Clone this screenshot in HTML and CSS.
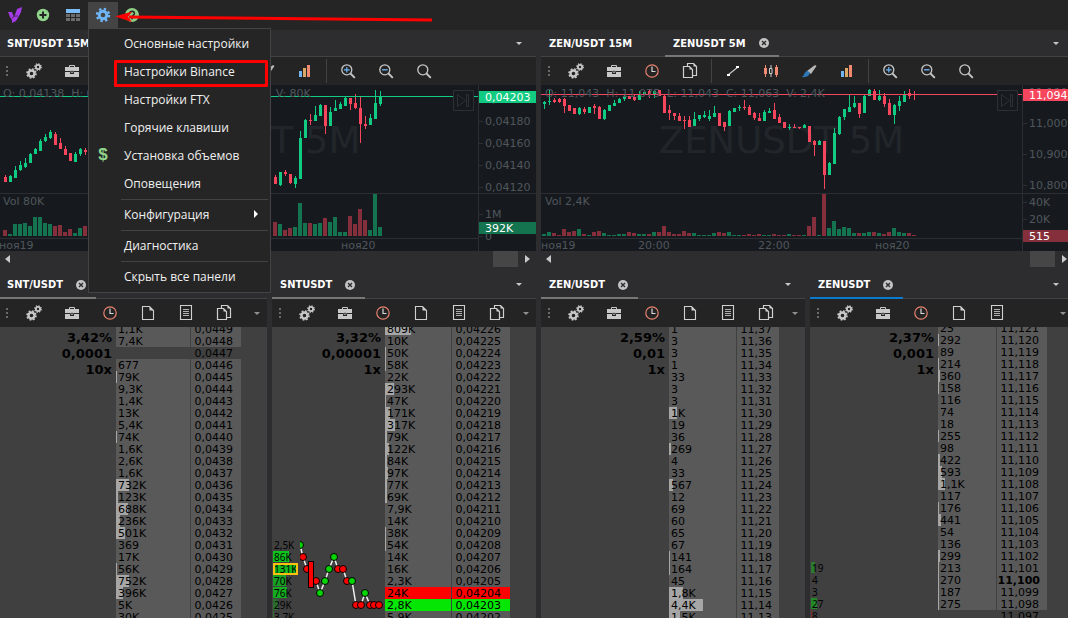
FILE: index.html
```html
<!DOCTYPE html>
<html lang="ru">
<head>
<meta charset="utf-8">
<title>Торговый терминал</title>
<link rel="stylesheet" href="styles.css">
</head>
<body>
<svg class="sprite" aria-hidden="true">
  <symbol id="i-gears" viewBox="0 0 16 16">
    <g fill="none" stroke="#c8c8c8">
      <circle cx="5.5" cy="10.5" r="3" stroke-width="2.4"/>
      <circle cx="5.5" cy="10.5" r="4.5" stroke-width="1.6" stroke-dasharray="1.77 1.77"/>
      <circle cx="12" cy="4" r="2.1" stroke-width="1.8"/>
      <circle cx="12" cy="4" r="3.3" stroke-width="1.2" stroke-dasharray="1.3 1.3"/>
    </g>
  </symbol>
  <symbol id="i-case" viewBox="0 0 16 16">
    <path d="M5.5 4.5v-2h5v2" fill="none" stroke="#c8c8c8"/>
    <path d="M1 4h14v4H1zM1 9h5v2h4V9h5v5H1z" fill="#c8c8c8"/>
    <path d="M7 7.5h2v2H7z" fill="#242424" stroke="#c8c8c8" stroke-width=".6"/>
  </symbol>
  <symbol id="i-clock" viewBox="0 0 16 16">
    <circle cx="8" cy="8" r="6.2" fill="none" stroke="#e8826e" stroke-width="1.2"/>
    <path d="M8 3.5V8.5H11.5" fill="none" stroke="#d8d8d8" stroke-width="1.2"/>
  </symbol>
  <symbol id="i-file" viewBox="0 0 16 16">
    <path d="M2.5 1.5h7l4 4v9h-11z" fill="none" stroke="#d0d0d0" stroke-width="1.1"/>
    <path d="M9.500 1.500v4h4z" fill="#d0d0d0"/>
  </symbol>
  <symbol id="i-doc" viewBox="0 0 16 16">
    <path d="M2.500 .500h11v14h-11z" fill="none" stroke="#d0d0d0" stroke-width="1.1"/>
    <path d="M5 4.500h6M5 6.500h6M5 8.500h6M5 10.500h6" stroke="#b0b0b0"/>
  </symbol>
  <symbol id="i-copy" viewBox="0 0 16 16">
    <path d="M5.500 3v-2.500h6l3 3v9h-4" fill="none" stroke="#d0d0d0" stroke-width="1.2"/>
    <path d="M1.500 3.500h6l3 3v8h-9z" fill="#242424" stroke="#d0d0d0" stroke-width="1.2"/>
    <path d="M7.500 3.500v3h3zM11.500 .500v3h3z" fill="#d0d0d0"/>
  </symbol>
  <symbol id="i-line" viewBox="0 0 16 16">
    <path d="M3 12L13 4" stroke="#c8c8c8" stroke-width="1.2"/>
    <path d="M2 11h3v2H2zM11 3h3v2h-3z" fill="#fff"/>
  </symbol>
  <symbol id="i-candles" viewBox="0 0 16 16">
    <path d="M2.500 2v12M13.500 2v12" stroke="#f28b74"/>
    <path d="M1 5h3v6H1zM12 4h3v8h-3z" fill="#f28b74"/>
    <path d="M8 2v12" stroke="#d0d0d0"/>
    <path d="M6.500 5.500h2.500v5h-2.500z" fill="#242424" stroke="#d0d0d0"/>
  </symbol>
  <symbol id="i-brush" viewBox="0 0 16 16">
    <path d="M6 8L14 2l1.500 1L10 11z" fill="#b8b8b8"/>
    <path d="M1 14c2-1 2-4 4-5.500 2-1.500 5 1.500 3 3.500-2 2-5 2.500-7 2z" fill="#2f78b8"/>
  </symbol>
  <symbol id="i-bars" viewBox="0 0 16 16">
    <path d="M2 8h3v6H2z" fill="#6fb4f5"/><path d="M6 5h3v9H6z" fill="#d8a866"/><path d="M10 2h3v12h-3z" fill="#f0896f"/>
  </symbol>
  <symbol id="i-search" viewBox="0 0 16 16">
    <circle cx="6.800" cy="6.800" r="5" fill="none" stroke="#c8c8c8" stroke-width="1.300"/>
    <path d="M10.500 10.500l4.300 4.300" stroke="#c8c8c8" stroke-width="1.800"/>
  </symbol>
  <symbol id="i-zoomin" viewBox="0 0 16 16">
    <use href="#i-search"/><path d="M4 6.800h5.600M6.800 4v5.600" stroke="#6fb4f5" stroke-width="1.200"/>
  </symbol>
  <symbol id="i-zoomout" viewBox="0 0 16 16">
    <use href="#i-search"/><path d="M4 6.800h5.600" stroke="#6fb4f5" stroke-width="1.300"/>
  </symbol>
  <symbol id="i-close" viewBox="0 0 10 10">
    <circle cx="5" cy="5" r="5" fill="#c4c4c4"/><path d="M3 3l4 4M7 3l-4 4" stroke="#2d2d30" stroke-width="1.400"/>
  </symbol>
</svg>

<header class="topbar">
  <button class="top-btn" aria-label="Логотип"><svg viewBox="0 0 16 16"><path d="M1 5h4l2 5 2-5 1-3 5-2-1 5-2 4-3 5-4 2v-3L3 10z" fill="#a43be6"/><path d="M5 11l3-2 3 0" stroke="#252525" stroke-width=".7" fill="none"/></svg></button>
  <button class="top-btn" aria-label="Добавить"><svg viewBox="0 0 16 16"><circle cx="8" cy="8" r="6.200" fill="#91d58c"/><path d="M8 4.500v7M4.500 8h7" stroke="#252525" stroke-width="2"/></svg></button>
  <button class="top-btn wide" aria-label="Таблица"><svg viewBox="0 0 16 16"><path d="M1 2h14v4H1z" fill="#7cbcf7"/><path d="M1 7h4v3H1zM6 7h4v3H6zM11 7h4v3h-4zM1 11h4v3H1zM6 11h4v3H6zM11 11h4v3h-4z" fill="#6c6c6c"/></svg></button>
  <div class="menu-anchor">
    <button class="top-btn active" aria-label="Настройки"><svg viewBox="0 0 16 16"><circle cx="8" cy="8" r="3.800" fill="none" stroke="#6fb4f5" stroke-width="3"/><circle cx="8" cy="8" r="6" fill="none" stroke="#6fb4f5" stroke-width="2.400" stroke-dasharray="2.360 2.356"/></svg></button>
    <div class="menu" role="menu">
      <button class="item" role="menuitem"><span class="mark"></span>Основные настройки</button>
      <button class="item picked" role="menuitem"><span class="mark"></span>Настройки Binance</button>
      <button class="item" role="menuitem"><span class="mark"></span>Настройки FTX</button>
      <button class="item" role="menuitem"><span class="mark"></span>Горячие клавиши</button>
      <button class="item" role="menuitem"><span class="mark">$</span>Установка объемов</button>
      <button class="item" role="menuitem"><span class="mark"></span>Оповещения</button>
      <hr>
      <button class="item" role="menuitem"><span class="mark"></span>Конфигурация<i class="sub"></i></button>
      <hr>
      <button class="item" role="menuitem"><span class="mark"></span>Диагностика</button>
      <hr>
      <button class="item" role="menuitem"><span class="mark"></span>Скрыть все панели</button>
    </div>
  </div>
  <button class="top-btn" aria-label="Справка"><svg viewBox="0 0 16 16"><circle cx="8" cy="8" r="7" fill="#8fcf87"/><path d="M5.800 6.500c0-3 4.600-3 4.600 0 0 1.700-2.300 1.600-2.300 3.500M8.100 11v1.600" fill="none" stroke="#252525" stroke-width="1.500"/></svg></button>
  <svg class="pointer" viewBox="0 0 320 16" aria-hidden="true"><path d="M14 9L317 12" stroke="#f00" stroke-width="3"/><path d="M0 8.500L17 3.500L13 9L17 14z" fill="#f00"/></svg>
</header>

<main class="workspace">
  <div class="charts" id="charts"></div>
  <div class="books" id="books"></div>
</main>
<script src="app.js"></script>
</body>
</html>
```
FILE: styles.css
```css
* { box-sizing: border-box; }
body {
  margin: 0;
  height: 100vh;
  overflow: hidden;
  display: flex;
  flex-direction: column;
  background: #2d2d30;
  color: #f0f0f0;
  font: 12px "Open Sans", "Noto Sans", sans-serif;
}
button {
  margin: 0;
  padding: 0;
  border: 0;
  background: none;
  color: inherit;
  font: inherit;
}
.sprite { position: absolute; width: 0; height: 0; }

.topbar {
  position: relative;
  z-index: 5;
  display: flex;
  flex: none;
  height: 30px;
  padding: 2px 0 0 1px;
  background: #252525;
}
.top-btn {
  display: flex;
  align-items: center;
  justify-content: center;
  width: 28px;
  height: 26px;
}
.top-btn.wide { width: 31px; }
.top-btn svg { width: 16px; height: 16px; }
.menu-anchor { position: relative; }
.menu-anchor .top-btn { width: 30px; background: #444; }
.pointer { position: absolute; left: 115px; top: 8px; width: 320px; height: 16px; }

.menu {
  position: absolute;
  left: 0;
  top: 26px;
  width: 183px;
  padding: 1px 2px 1px 0;
  border: 1px solid #434346;
  background: #252525;
}
.item {
  position: relative;
  display: flex;
  align-items: center;
  width: 100%;
  height: 28px;
  padding-bottom: 2px;
  white-space: nowrap;
}
.mark {
  width: 35px;
  padding-right: 7px;
  color: #91d58c;
  font: bold 17px "Liberation Sans", sans-serif;
  text-align: center;
}
.picked::after {
  content: "";
  position: absolute;
  inset: 2px 0 -1px 25px;
  border: 3px solid #f00;
  border-radius: 1px;
}
.sub {
  margin-left: auto;
  margin-right: 10px;
  border: 4px solid transparent;
  border-left: 4px solid #fff;
  border-right: 0;
}
.menu hr {
  height: 1px;
  margin: 1px 0 1px 32px;
  border: 0;
  background: #434346;
}

.workspace {
  flex: 1;
  min-height: 0;
  margin-right: -5px;
  display: flex;
  flex-direction: column;
}
.charts { display: grid; grid-template-columns: 536fr 532fr; gap: 5px; }
.books {
  flex: 1;
  min-height: 0;
  display: grid;
  grid-template-columns: 267fr 264fr 264fr 263fr;
  gap: 5px;
}
.panel { display: flex; flex-direction: column; min-width: 0; min-height: 0; overflow: hidden; }

.tabs {
  display: flex;
  flex: none;
  height: 27px;
  border-bottom: 1px solid #434346;
}
.books .tabs { height: 32px; padding-top: 4px; }
.tab {
  position: relative;
  display: flex;
  align-items: center;
  gap: 13px;
  padding: 0 10px 0 8px;
  font: bold 11px "DejaVu Sans Condensed", "Noto Sans", sans-serif;
  color: #fff;
}
.panel:first-child .tab:first-child { padding-left: 7px; }
.tab svg { width: 10px; height: 10px; }
.tab.idle svg { visibility: hidden; }
.tab.on::after {
  content: "";
  position: absolute;
  inset: auto 0 -1px 0;
  height: 2px;
  background: #777;
}
.tab.focus::after { background: #0a7acc; }
.caret {
  align-self: center;
  margin: 0 14px 0 auto;
  border: 3px solid transparent;
  border-top-color: #c8c8c8;
  border-bottom: 0;
}

.tools {
  display: flex;
  flex: none;
  align-items: center;
  height: 28px;
  background: #242424;
}
.grip {
  width: 16px;
  height: 10px;
  background: repeating-linear-gradient(#6a6a6a 0 2px, transparent 2px 4px) 7px 0 / 2px 100% no-repeat;
}
.panel:first-child .grip { width: 15px; background-position-x: 6px; }
.tool {
  display: flex;
  flex: none;
  align-items: center;
  justify-content: center;
  width: 38px;
  height: 28px;
}
.tool svg { width: 16px; height: 16px; }
.rule { width: 1px; height: 24px; margin: 0 2px; background: #434346; }
.tools .caret { margin-right: 7px; border-top-color: #909090; }

.chart { display: flex; height: 166px; background: #161a1e; }
.plot { flex: 1; min-width: 0; height: 166px; }
.axis { flex: none; width: 58px; height: 166px; border-left: 1px solid #2b2f34; }
.axis.narrow { width: 51px; }
.chart text { font: 11px "DejaVu Sans", sans-serif; fill: #50565c; white-space: pre; }
.chart .watermark { font-size: 37px; fill: #22262b; text-anchor: middle; }
.chart .on-badge { fill: #fff; }
.grid { stroke: #2b2f34; }
.up { fill: #10cb81; }
.down { fill: #f6465d; }
.vup { fill: #14744f; }
.vdown { fill: #862f3c; }

.scroll { display: flex; align-items: center; height: 16px; }
.thumb { width: 25px; height: 16px; margin-left: auto; background: #464647; }
.arrow-l, .arrow-r { border: 4px solid transparent; }
.arrow-l { margin-left: 5px; border-right: 5px solid #c8c8c8; border-left: 0; }
.arrow-r { margin: 0 6px 0 7px; border-left: 5px solid #c8c8c8; border-right: 0; }

.book {
  flex: 1;
  min-height: 0;
  display: flex;
  overflow: hidden;
  background: #404040;
  color: #000;
}
.info { flex: 1; min-width: 0; padding-top: 3px; }
.stats {
  margin: 0;
  padding: 0 4px 0 0;
  list-style: none;
  text-align: right;
  font: bold 13px/16px "DejaVu Sans", sans-serif;
}
.flow { display: flex; margin-top: 161px; }
.flow.late { margin-top: 184px; }
.clusters { width: 28px; margin: 0; padding: 0 0 0 1px; list-style: none; font: 10px/12px "Noto Sans", sans-serif; }
.clusters li {
  width: 25px;
  height: 12px;
  padding-left: 1px;
  background: linear-gradient(var(--tone), var(--tone)) 0 0 / var(--bar) 11px no-repeat;
}
.clusters .peak { outline: 2px solid #fdc010; outline-offset: -2px; }
.trades { flex: 1; min-width: 0; height: 84px; }
.trades circle, .trades rect { stroke: #000; stroke-width: 1; }
.trades polyline { fill: none; stroke: #f0f0f0; stroke-width: 1.5; }
.buy { fill: #05d505; }
.sell { fill: #f00; }

.ladder {
  margin: -4px 26px 0 0;
  align-self: flex-start;
  border-collapse: collapse;
  table-layout: fixed;
  font: 11px/11px "DejaVu Sans", sans-serif;
}
.ladder.shift { margin-top: -5px; }
.ladder td { height: 12px; padding: 1px 0 0 2px; white-space: nowrap; background-color: #595959; }
.ladder td + td { padding-left: 4px; border-left: 1px solid #404040; }
.ladder .bar { background: linear-gradient(#a6a6a6, #a6a6a6) 0 0 / var(--bar) 100% no-repeat #595959; }
.ladder .off td { background-color: #404040; }
.ladder .ask td { background-color: #f00; }
.ladder .bid td { background-color: #05e605; }
.ladder .round td + td { padding-left: 1px; font-weight: bold; }
```
FILE: app.js
```js
const icon = (id) => `<svg aria-hidden="true"><use href="#i-${id}"/></svg>`;
const tool = ([id, label]) => `<button class="tool" aria-label="${label}">${icon(id)}</button>`;

const TOOLS = {
  main: [['gears', 'Настройки'], ['case', 'Портфель'], ['clock', 'Таймфрейм'], ['copy', 'Копировать']],
  draw: [['line', 'Линия'], ['candles', 'Свечи'], ['brush', 'Кисть'], ['bars', 'Объемы']],
  zoom: [['zoomin', 'Увеличить'], ['zoomout', 'Уменьшить'], ['search', 'Поиск']],
  book: [['gears', 'Настройки'], ['case', 'Портфель'], ['clock', 'Время'], ['file', 'Новый'], ['doc', 'Список'], ['copy', 'Копировать']],
};

/* Candle: direction, body top, body bottom, wick top, wick bottom, volume */
const SNT_A = `d 177 182 175 182 6|u 176 182 175 182 2|u 170 178 166 178 12|u 165 170 161 171 12|u 163 167 158 168 13|u 154 163 153 163 10|u 149 154 148 154 19|u 141 151 139 151 19|u 137 141 134 142 13|u 132 138 130 139 12|d 134 145 132 145 10|d 143 149 138 149 11|d 149 155 146 155 4|d 153 161 153 161 7|u 154 162 152 162 3|u 149 154 148 156 8|d 150 152 148 155 10`;
const SNT_B = `d 177 184 175 184 14|u 172 185 172 186 12|d 172 174 170 176 6|d 174 183 174 184 8|u 178 184 176 188 9|u 138 179 131 179 33|u 120 138 119 138 13|d 120 121 114 125 13|u 115 121 106 121 12|u 105 116 104 116 13|d 105 126 105 134 18|u 112 126 107 126 14|u 108 111 100 111 19|u 104 109 102 109 4|u 98 106 97 106 4|d 98 104 98 110 20|d 103 108 94 109 12|d 108 124 97 143 27|d 124 126 116 129 16|u 118 125 114 125 6|u 103 119 90 119 42|u 97 104 91 106 9`;
const ZEN = `u 102 104 101 109 2|u 101 102 90 105 4|d 100 102 98 103 3|d 99 102 98 103 1|d 99 106 98 113 7|d 105 111 105 111 4|d 108 114 108 114 5|u 108 114 107 115 7|d 109 112 107 114 2|u 107 113 107 113 1|d 106 108 104 114 4|d 107 119 106 119 5|u 110 119 109 120 3|u 105 111 105 111 1|u 103 106 100 106 1|u 99 103 98 103 2|u 96 99 95 101 2|d 96 99 96 99 4|d 97 100 95 101 3|u 94 100 91 100 2|u 92 94 91 95 2|d 91 94 90 98 2|u 91 94 90 98 4|d 90 96 90 96 4|d 96 113 95 113 10|d 110 113 105 120 4|d 113 116 113 120 2|d 116 121 113 121 2|d 120 121 116 129 5|d 120 127 116 127 3|u 119 126 112 126 3|u 115 119 115 121 1|u 115 117 111 118 1|u 116 119 110 121 1|u 113 117 106 117 3|d 113 126 113 126 4|d 122 127 122 131 3|u 111 126 110 126 4|u 108 112 108 112 1|u 107 108 105 111 1|d 107 108 100 110 1|d 107 115 105 115 2|d 113 118 112 120 1|d 118 121 113 121 2|u 112 121 110 121 1|u 111 113 108 113 1|d 110 119 103 119 2|d 117 123 114 123 1|d 122 128 122 128 1|u 127 128 124 130 2|d 127 128 124 128 1|d 127 128 127 129 1|u 125 128 124 128 1|d 126 142 126 142 10|d 141 145 140 156 19|u 141 145 140 145 1|d 141 175 141 189 42|u 163 175 162 175 8|u 133 164 128 164 15|u 117 134 116 135 7|u 109 117 109 120 9|u 107 112 95 112 8|u 103 107 96 108 3|d 103 114 103 118 3|u 96 113 95 113 3|u 90 96 89 96 4|d 91 100 89 100 4|u 96 100 90 101 3|d 96 104 93 107 2|d 103 115 99 115 4|u 105 115 104 124 8|u 101 106 96 111 4|u 94 102 91 102 3|d 93 96 89 99 3|d 94 95 91 100 1`;

const TOP = 85;
function candles(source, x0) {
  return source.split('|').map((row, i) => {
    const [dir, b1, b2, w1, w2, vol] = row.split(' ').map((v, k) => (k ? Number(v) : v));
    const x = x0 + i * 5;
    const cls = dir === 'u' ? 'up' : 'down';
    return `<rect class="${cls}" x="${x}" y="${w1 - TOP}" width="1" height="${Math.max(1, w2 - w1)}"/>` +
      `<rect class="${cls}" x="${x - 1}" y="${b1 - TOP}" width="3" height="${Math.max(1, b2 - b1)}"/>` +
      `<rect class="v${cls}" x="${x - 2}" y="${151 - vol}" width="4" height="${vol}"/>`;
  }).join('');
}

function chartPanel(c) {
  const tabs = c.tabs.map(([name, on]) => `<button class="tab ${on ? 'on' : 'idle'}">${name}${icon('close')}</button>`).join('');
  const ticks = c.ticks.map(([y, t]) => `<path class="grid" d="M0 ${y}.5h4"/><text x="6" y="${y + 4}">${t}</text>`).join('');
  const badges = c.badges.map(([y, t, cls]) => `<rect class="${cls}" y="${y}" width="60" height="12"/><text class="on-badge" x="6" y="${y + 10}">${t}</text>`).join('');
  const times = c.times.map(([x, t]) => `<text x="${x}" y="164">${t}</text>`).join('');
  return `<section class="panel">
    <div class="tabs">${tabs}<i class="caret"></i></div>
    <div class="tools"><span class="grip"></span>${TOOLS.main.map(tool).join('')}<span class="rule"></span>${TOOLS.draw.map(tool).join('')}<span class="rule"></span>${TOOLS.zoom.map(tool).join('')}</div>
    <div class="chart">
      <svg class="plot">
        <text class="watermark" x="50%" y="68">${c.mark}</text>
        <line class="grid" x2="100%" y1="108.5" y2="108.5"/><line class="grid" x2="100%" y1="153.5" y2="153.5"/>
        ${c.series.map(([s, x]) => candles(s, x)).join('')}
        <rect class="${c.dir}" y="${c.line}" width="100%" height="1"/>
        <text x="${c.pad}" y="12">${c.ohlc}</text><text x="${c.pad}" y="120">${c.vol}</text>${times}
        <svg x="100%" overflow="visible"><g fill="#161a1e" stroke="#2d3136"><path d="M-24.500 5.500h20v20h-20z"/><path d="M-20.500 9.500v12l8-6zM-11.500 9.500h2v12h-2z"/></g></svg>
      </svg>
      <svg class="axis ${c.narrow ? 'narrow' : ''}">
        ${ticks}<path class="grid" d="M0 108.5h60"/>${badges}
      </svg>
    </div>
    <div class="scroll"><i class="arrow-l"></i><span class="thumb"></span><i class="arrow-r"></i></div>
  </section>`;
}

document.getElementById('charts').innerHTML = [
  {
    tabs: [['SNT/USDT 15M', false], ['SNTUSDT 5M', true]], mark: 'SNTUSDT 5M', pad: 3, dir: 'up', line: 11,
    ohlc: 'O: 0,04138  H: 0,04139  L: 0,04138  C: 0,04138   V: 80K', vol: 'Vol 80K',
    series: [[SNT_A, 5], [SNT_B, 275]], times: [[-1, 'ноя19'], [341, 'ноя20']],
    ticks: [[14, '0,04200'], [36, '0,04180'], [58, '0,04160'], [80, '0,04140'], [102, '0,04120'], [129, '1M'], [151, '0']],
    badges: [[6, '0,04203', 'up'], [137, '392K', 'vup']],
  },
  {
    tabs: [['ZEN/USDT 15M', false], ['ZENUSDT 5M', true]], mark: 'ZENUSDT 5M', pad: 4, dir: 'down', line: 9, narrow: true,
    ohlc: 'O: 11,043  H: 11,075  L: 11,043  C: 11,063  V: 2,4K', vol: 'Vol 2,4K',
    series: [[ZEN, 3]], times: [[0, 'ноя19'], [97, '20:00'], [217, '22:00'], [334, 'ноя20']],
    ticks: [[7, '11,100'], [38, '11,000'], [69, '10,900'], [100, '10,800'], [117, '40K'], [134, '20K']],
    badges: [[4, '11,094', 'down'], [145, '515', 'vdown']],
  },
].map(chartPanel).join('');

/* Ladder sizes are "value" or "value:bar width"; prices step down by one tick */
const BOOKS = [
  {
    name: 'SNT/USDT', stats: ['3,42%', '0,0001', '10x'], cols: [74, 51], first: 449, width: 4, lead: '0,',
    sizes: '1,1K 7,4K - 677 79K:1 9,3K 1,4K 13K 5,4K 74K:1 1,6K 2,6K 1,6K 732K:13 123K:2 688K:12 236K:4 501K:9 369 17K 56K:1 752K:13 396K:7 5K 30K',
    off: [2],
  },
  {
    name: 'SNTUSDT', stats: ['3,32%', '0,00001', '1x'], cols: [66, 59], first: 4226, width: 5, lead: '0,',
    sizes: '809K:26 10K 50K:1 58K:1 22K 293K:9 47K:1 171K:5 317K:10 79K:2 122K:4 84K:2 97K:3 77K:2 69K:2 7,9K 14K 38K:1 54K:1 14K 16K 2,3K 24K 2,8K 5,9K',
    off: [], ask: 22, bid: 23,
    clusters: [['2,5K', 0], ['86K', 16, '#0fc41c'], ['131K', 24, '#12b81e', 'peak'], ['70K', 13, '#18a024'], ['76K', 14, '#14ae20'], ['29K', 5, '#2c6e30'], ['3,7K', 1, '#2c6e30']],
    trades: [[0, 6, 1], [3, 18, 0], [7, 30, 0], [16, 42, 0], [20, 54, 1], [25, 42, 1], [29, 30, 1], [34, 18, 1], [38, 30, 0], [43, 30, 0], [47, 42, 0], [52, 42, 1], [56, 66, 0], [61, 66, 0], [65, 54, 1], [70, 66, 0], [74, 66, 0], [79, 66, 0]],
  },
  {
    name: 'ZEN/USDT', stats: ['2,59%', '0,01', '1x'], cols: [67, 43], first: 1137, width: 4, split: 2,
    sizes: '1 3 3 1 33 3 3 1K:8 19 36 269:2 4 33 567:4 12 69 60 65 67 141:1 164:1 45 1,8K:14 4,4K:34 1,5K:11',
    off: [],
  },
  {
    name: 'ZENUSDT', stats: ['2,37%', '0,001', '1x'], cols: [58, 51], first: 11121, width: 5, split: 2, shift: true, focus: true,
    sizes: '25 292:1 89 214:1 360:2 158:1 116 74 18 255:1 98 422:2 593:4 1,1K:7 117 176:1 441:3 54 136 299:2 213:1 270:1 187:1 275:1 -',
    off: [24], round: 21,
    clusters: [['19', 4, '#2c7a30'], ['4', 0], ['3', 0], ['27', 6, '#238a2a'], ['8', 1, '#7a2c2c']],
  },
];

function ladder(b) {
  const rows = b.sizes.split(' ').map((cell, i) => {
    const [value, bar] = cell.split(':');
    const digits = String(b.first - i).padStart(b.width, '0');
    const price = b.lead ? b.lead + digits : `${digits.slice(0, b.split)},${digits.slice(b.split)}`;
    const cls = b.off.includes(i) ? 'off' : i === b.ask ? 'ask' : i === b.bid ? 'bid' : i === b.round ? 'round' : '';
    const mark = bar ? ` class="bar" style="--bar:${bar}px"` : '';
    return `<tr class="${cls}"><td${mark}>${value === '-' ? '' : value}</td><td>${price}</td></tr>`;
  }).join('');
  return `<table class="ladder ${b.shift ? 'shift' : ''}" style="width:${b.cols[0] + b.cols[1]}px"><colgroup><col style="width:${b.cols[0]}px"><col style="width:${b.cols[1]}px"></colgroup><tbody>${rows}</tbody></table>`;
}

function flow(b) {
  if (!b.clusters) return '';
  const list = b.clusters.map(([t, w, tone, cls]) => `<li class="${cls || ''}" style="--bar:${w}px;--tone:${tone || 'transparent'}">${t}</li>`).join('');
  const trades = b.trades
    ? `<svg class="trades"><polyline points="${b.trades.map(([x, y]) => `${x},${y}`).join(' ')}"/>
       ${b.trades.map(([x, y, up]) => `<circle class="${up ? 'buy' : 'sell'}" cx="${x}" cy="${y}" r="3.5"/>`).join('')}
       <rect class="sell" x="8.5" y="22.5" width="5" height="26"/></svg>`
    : '';
  return `<div class="flow ${b.shift ? 'late' : ''}"><ul class="clusters">${list}</ul>${trades}</div>`;
}

document.getElementById('books').innerHTML = BOOKS.map((b) => `<section class="panel">
  <div class="tabs"><button class="tab on ${b.focus ? 'focus' : ''}">${b.name}${icon('close')}</button><i class="caret"></i></div>
  <div class="tools"><span class="grip"></span>${(b.focus ? TOOLS.book.slice(0, 5) : TOOLS.book).map(tool).join('')}<i class="caret"></i></div>
  <div class="book">
    <div class="info"><ul class="stats">${b.stats.map((s) => `<li>${s}</li>`).join('')}</ul>${flow(b)}</div>
    ${ladder(b)}
  </div>
</section>`).join('');
```
